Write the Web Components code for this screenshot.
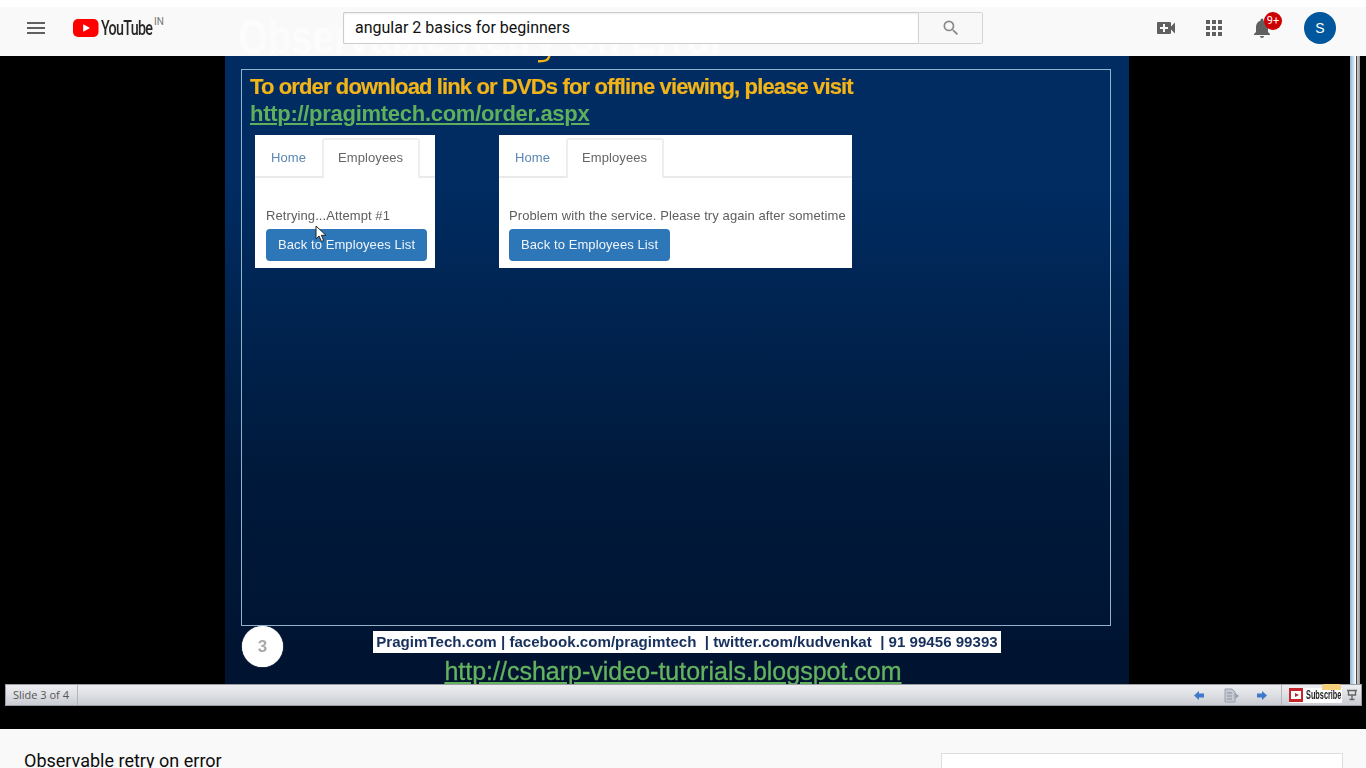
<!DOCTYPE html>
<html lang="en"><head><meta charset="utf-8"><title>Observable retry on error</title>
<style>
html,body{margin:0;padding:0;background:#f9f9f9;height:100%;overflow:hidden;font-family:Roboto,"Liberation Sans",sans-serif}
</style></head><body>
<yt-app></yt-app>
<script>
const def=(name,css,html)=>{customElements.define(name,class extends HTMLElement{constructor(){super();const r=this.attachShadow({mode:'open'});r.innerHTML='<style>'+css+'</style>'+html;}});};

def('yt-logo',`:host{display:flex;align-items:center;position:relative;width:92px;height:20px}
svg{display:block;flex:none}
.w{display:block;font:500 21px/20px Roboto,sans-serif;color:#282828;letter-spacing:-1px;margin-left:2px;transform:scaleX(.68);transform-origin:left center;white-space:nowrap;width:52px}
.c{position:absolute;left:81px;top:-2px;font:400 10px/12px Roboto,sans-serif;color:#777}`,
`<svg width="26" height="18" viewBox="0 0 26 18"><rect width="25.5" height="18" rx="5" fill="#f00"/><path d="M10.2 5.2 17 9l-6.8 3.8z" fill="#fff"/></svg><span class="w">YouTube</span><span class="c">IN</span>`);

def('yt-search',`:host{display:flex;width:640px;height:32px;box-sizing:border-box}
.i{flex:1;box-sizing:border-box;background:#fff;border:1px solid #ccc;border-right:0;border-radius:2px 0 0 2px;box-shadow:inset 0 1px 2px #eee;font:400 16px/30px Roboto,sans-serif;color:#111;padding-left:11px}
.b{width:65px;box-sizing:border-box;border:1px solid #d3d3d3;background:#f8f8f8;border-radius:0 2px 2px 0;display:flex;align-items:center;justify-content:center}`,
`<div class="i"><slot></slot></div><div class="b"><svg width="20" height="20" viewBox="0 0 24 24"><path fill="#8a8a8a" d="M15.5 14h-.79l-.28-.27A6.47 6.47 0 0 0 16 9.5 6.5 6.5 0 1 0 9.5 16c1.61 0 3.09-.59 4.23-1.57l.27.28v.79l5 4.99L20.49 19zm-6 0C7.01 14 5 11.99 5 9.5S7.01 5 9.5 5 14 7.01 14 9.5 11.99 14 9.5 14z"/></svg></div>`);

def('yt-header',`:host{display:flex;align-items:center;height:56px;box-sizing:border-box;position:relative;background:linear-gradient(#fff 0 7px,#f9f9f9 7px);overflow:hidden;flex:none;z-index:2}
.ghost{position:absolute;left:238px;top:8px;font:700 48px/60px "Liberation Sans",sans-serif;color:#fcfcfc;white-space:nowrap;transform:scaleX(.8);transform-origin:left center}
.row{position:relative;display:flex;align-items:center;width:100%}
.menu{margin-left:24px;width:24px;height:24px;flex:none}
yt-logo{margin-left:25px}
yt-search{margin-left:178px}
.act{margin-left:auto;display:flex;align-items:center;gap:24px;padding-right:30px}
svg{display:block}
.bell{position:relative;width:24px;height:24px;margin-right:6px}
.badge{position:absolute;left:14px;top:-4px;width:18px;height:18px;border-radius:50%;background:#cc0000;color:#fff;font:400 11px/18px Roboto,sans-serif;text-align:center}
.av{width:32px;height:32px;border-radius:50%;background:#00579d;color:#fff;font:500 14px/32px "Liberation Sans",sans-serif;text-align:center}`,
`<div class="ghost">Observable Retry On Error</div><div class="row">
<svg class="menu" viewBox="0 0 24 24"><path fill="#606060" d="M3 6h18v2H3zM3 11h18v2H3zM3 16h18v2H3z"/></svg>
<yt-logo></yt-logo><yt-search>angular 2 basics for beginners</yt-search>
<div class="act">
<svg width="24" height="24" viewBox="0 0 24 24"><path fill="#606060" d="M17 10.5V7a1 1 0 0 0-1-1H4a1 1 0 0 0-1 1v10a1 1 0 0 0 1 1h12a1 1 0 0 0 1-1v-3.5l4 4v-11zM14 13h-3v3H9v-3H6v-2h3V8h2v3h3z"/></svg>
<svg width="24" height="24" viewBox="0 0 24 24"><path fill="#606060" d="M4 4h4v4H4zM10 4h4v4h-4zM16 4h4v4h-4zM4 10h4v4H4zM10 10h4v4h-4zM16 10h4v4h-4zM4 16h4v4H4zM10 16h4v4h-4zM16 16h4v4h-4z"/></svg>
<div class="bell"><svg width="24" height="24" viewBox="0 0 24 24"><path fill="#606060" d="M12 22c1.1 0 2-.9 2-2h-4c0 1.1.9 2 2 2zm6-6v-5c0-3.07-1.63-5.64-4.5-6.32V4a1.5 1.5 0 0 0-3 0v.68C7.64 5.36 6 7.92 6 11v5l-2 2v1h16v-1z"/></svg><div class="badge">9+</div></div>
<div class="av">S</div>
</div></div>`);

def('demo-panel',`:host{display:block;background:#fff;height:133px;box-sizing:border-box;font:13px/18px "Liberation Sans",sans-serif;color:#5e5e5e;overflow:hidden;filter:blur(.4px);letter-spacing:.09px}
.tabs{display:flex;height:43px;box-sizing:border-box;border-bottom:2px solid #eaeaea;padding-top:3px;padding-left:1px}
.t{padding:0 15px;height:40px;line-height:40px;box-sizing:border-box;color:#5b86b3}
.t.a{background:#fff;color:#666;border:2px solid #eee;border-bottom:0;padding:0 15px 0 14px;line-height:36px;margin-left:1px;border-radius:3px 3px 0 0}
.b{padding:29px 6px 0 var(--pad,11px);white-space:nowrap}
.btn{display:inline-block;margin-top:4px;height:32px;line-height:32px;padding:0 12px;background:#2d76b7;color:#f1f5f9;border-radius:4px}`,
`<div class="tabs"><div class="t">Home</div><div class="t a">Employees</div></div><div class="b"><slot></slot><br><span class="btn">Back to Employees List</span></div>`);

def('slide-view',`:host{display:block;height:628px;box-sizing:border-box;background:linear-gradient(#002c62 0,#002c62 20%,#001a3c 65%,#001330 100%);padding:13px 18px 0 16px;position:relative;overflow:visible}
.frame{box-sizing:border-box;height:557px;border:1px solid #8fb3cb;padding:1px 8px 0 8px}
h2{margin:0;font:700 22px/32px "Liberation Sans",sans-serif;color:#f3b419;letter-spacing:-.87px;white-space:nowrap;filter:blur(.35px);-webkit-text-stroke:.2px #f3b419}
a{display:block;margin-top:-1px;font:700 22px/24px "Liberation Sans",sans-serif;color:#5fb05c;text-decoration:underline;white-space:nowrap;filter:blur(.35px);letter-spacing:-.28px}
.panels{display:flex;margin-top:9px;padding-left:5px}
demo-panel{flex:none}
.p1{width:180px}.p2{width:353px;margin-left:64px;--pad:10px}
.foot{display:flex;margin-top:0;padding-left:1px;position:relative;height:58px}
.n{flex:none;width:41px;height:41px;border-radius:50%;background:#fff;color:#aaa;font:700 17px/41px "Liberation Sans",sans-serif;text-align:center;filter:blur(.5px);box-shadow:0 0 1px #fff}
.mid{flex:1;display:flex;flex-direction:column;align-items:center;padding-right:20px;padding-top:5px}
.bar{background:#fff;color:#17305c;font:700 15.1px/22px "Liberation Sans",sans-serif;padding:0 3px;white-space:pre;height:22px;filter:blur(.3px)}
.link{margin-top:6px;margin-right:28px;font:400 25px/24px "Liberation Sans",sans-serif;color:#64b35f;text-decoration:underline;white-space:nowrap;filter:blur(.3px);-webkit-text-stroke:.3px #64b35f}
.hook{position:absolute;left:312px;top:0}
.cur{position:absolute;left:90px;top:169px;filter:blur(.3px)}`,
`<svg class="hook" width="14" height="7" viewBox="0 0 14 7"><path d="M12.5 0C11 4 9 5.5 1 5.2" fill="none" stroke="#f3b419" stroke-width="2.4"/></svg>
<div class="frame"><h2>To order download link or DVDs for offline viewing, please visit</h2><a>http://pragimtech.com/order.aspx</a>
<div class="panels"><demo-panel class="p1">Retrying...Attempt #1</demo-panel><demo-panel class="p2">Problem with the service. Please try again after sometime</demo-panel></div></div>
<div class="foot"><div class="n">3</div><div class="mid"><div class="bar">PragimTech.com | facebook.com/pragimtech  | twitter.com/kudvenkat  | 91 99456 99393</div><div class="link">http://csharp-video-tutorials.blogspot.com</div></div></div>
<svg class="cur" width="12" height="18" viewBox="0 0 12 18"><path d="M1 1v13l3-3 2.5 5.5 2.2-1L6.4 10.3H11z" fill="#fff" stroke="#222" stroke-width="1"/></svg>`);

def('ppt-status',`:host{display:flex;align-items:center;height:22px;box-sizing:border-box;margin:0 4px 0 5px;background:linear-gradient(#eceef1,#dfe1e5 45%,#c9ccd2);border:1px solid #9a9da3;font:400 11px/20px "Open Sans","Liberation Sans",sans-serif;color:#555;position:relative}
.s{padding:0 8px 0 7px;border-right:1px solid #b3b5ba;height:100%;white-space:nowrap}
.r{margin-left:auto;display:flex;align-items:center;height:100%;padding-right:3px}
.r svg{display:block;filter:blur(.4px);flex:none}
.a1{margin-right:20px}.a2{margin-right:18px}
.sep{width:1px;height:100%;background:#b3b5ba;margin:0 7px 0 14px}
.sub{display:flex;align-items:center;background:#fff;height:15px;width:53px;margin-right:4px;position:relative}
.sub::before{content:"";position:absolute;left:33px;top:-4px;width:19px;height:6px;background:#f4cf7c;border-radius:2px 2px 0 0}
.sub i{display:block;flex:none;width:14px;height:14px;background:#c4262c;position:relative}
.sub i::after{content:"";position:absolute;left:2px;top:3px;width:10px;height:8px;background:#fff}
.sub i::before{content:"";position:absolute;z-index:1;left:6px;top:5px;border-left:4px solid #a33;border-top:2px solid transparent;border-bottom:2px solid transparent}
.sub b{position:relative;display:block;font:700 12px/15px "Liberation Sans",sans-serif;color:#222;margin-left:3px;width:35px;white-space:nowrap;transform:scaleX(.61);transform-origin:left center;filter:blur(.2px)}`,
`<div class="s">Slide 3 of 4</div><div class="r">
<svg class="a1" width="10" height="9" viewBox="0 0 10 9"><path fill="#3d79c9" d="M5 0v2.5h5v4H5V9L0 4.5z"/></svg>
<svg class="a2" width="15" height="15" viewBox="0 0 15 15"><path fill="#c4c9d2" stroke="#9aa0ac" d="M1 1h7l3 3v10H1z"/><path stroke="#8a909c" d="M3 5h5M3 8h5M3 11h5"/><path fill="#9aa0ac" d="M11 5l4 3-4 3z"/></svg>
<svg width="10" height="9" viewBox="0 0 10 9"><path fill="#3d79c9" d="M5 0v2.5H0v4h5V9l5-4.5z"/></svg>
<span class="sep"></span>
<div class="sub"><i></i><b>Subscribe</b></div>
<svg width="12" height="12" viewBox="0 0 12 12"><path fill="none" stroke="#666" stroke-width="1.4" d="M1 1.5h10M2.5 2v4h7V2M6 6v4M3.5 10.5h5"/></svg>
</div>`);

def('video-area',`:host{display:flex;flex-direction:column;height:673px;background:#000;position:relative;flex:none;overflow:hidden}
.stage{display:grid;grid-template-columns:225px 904px 1fr;height:628px;flex:none}
.edge{position:absolute;right:6px;top:0;height:628px;width:10px;background:linear-gradient(90deg,#8eb2cf,#d5e7f3 40%,#fff 55%,#444 65%,#ccc 70%,#999 100%)}
ppt-status{flex:none}`,
`<div class="stage"><div></div><slide-view></slide-view><div></div></div><div class="edge"></div><ppt-status></ppt-status>`);

def('yt-below',`:host{display:flex;flex:1;background:#f9f9f9;min-height:0;overflow:hidden;padding:0 23px 0 24px}
.t{flex:1;font:400 18px/24px Roboto,sans-serif;color:#0d0d0d;padding-top:20px;white-space:nowrap}
.s{flex:none;width:402px;height:100px;margin-top:24px;box-sizing:border-box;background:#fff;border:1px solid #ddd}`,
`<div class="t"><slot></slot></div><div class="s"></div>`);

def('yt-app',`:host{display:flex;flex-direction:column;height:768px;width:1366px;overflow:hidden}`,
`<yt-header></yt-header><video-area></video-area><yt-below>Observable retry on error</yt-below>`);
</script>
</body></html>
